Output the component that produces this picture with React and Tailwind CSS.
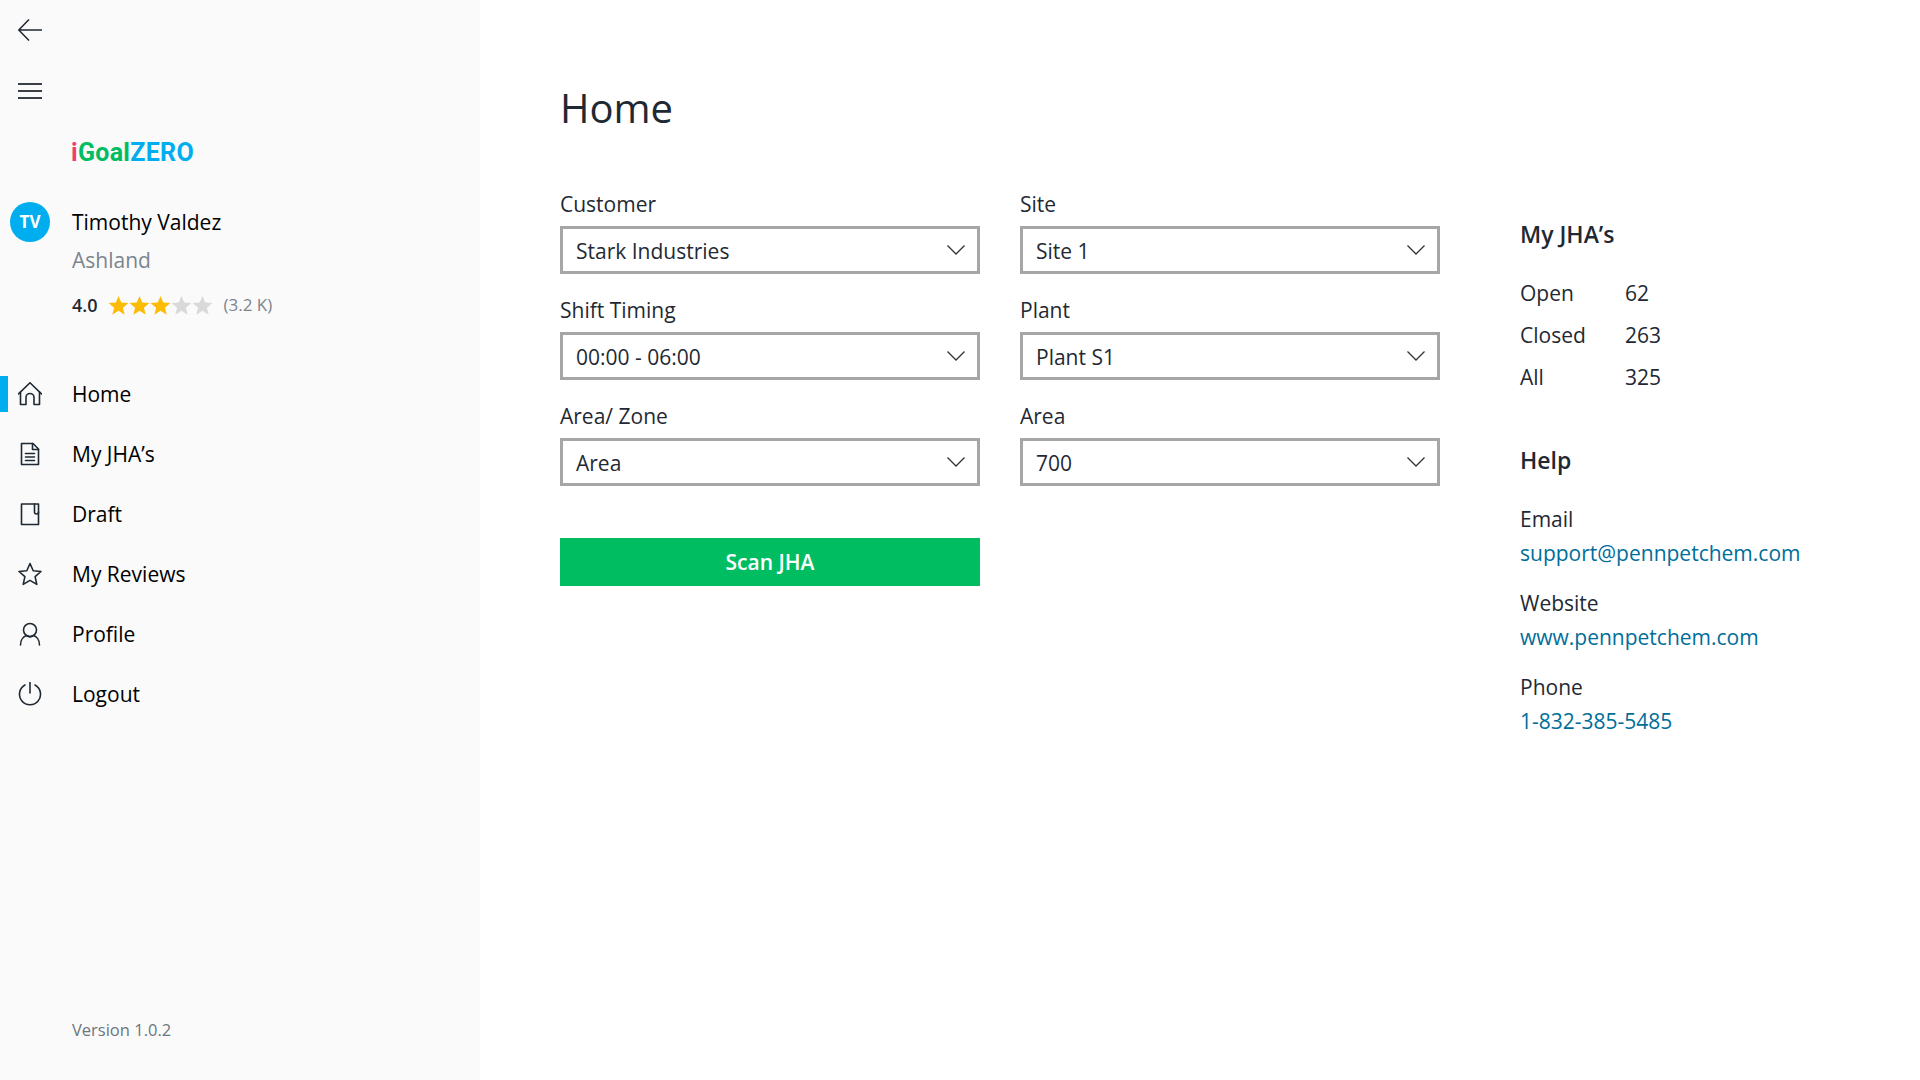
import React from 'react';

const stroke = { fill: 'none', stroke: 'currentColor', strokeWidth: 1.6, strokeLinecap: 'round', strokeLinejoin: 'round' };

const Icon = ({ children, className = 'w-6 h-6' }) => (
  <svg viewBox="0 0 24 24" className={className} {...stroke}>{children}</svg>
);

const HomeIcon = () => (
  <Icon>
    <path d="M0.5 12 12 0.8 23.5 12" />
    <path d="M2.5 10v12.5H8v-7a4 4 0 0 1 8 0v7h5.5V10" />
  </Icon>
);
const DocIcon = () => (
  <Icon>
    <path d="M3.5 1.5H15l5.5 5.5v15.5h-17z" />
    <path d="M14.5 1.5v6h6" />
    <path d="M7.5 11.5h9M7.5 15h9M7.5 18.5h9" />
  </Icon>
);
const DraftIcon = () => (
  <Icon>
    <path d="M3.5 2h17v20.5h-17z" />
    <path d="M16.5 2v8a2 2 0 0 0 4 0" />
  </Icon>
);
const StarOutline = () => (
  <Icon>
    <path d="M12 1.5l3.2 7.2 7.8.8-5.9 5.2 1.7 7.7-6.8-4-6.8 4 1.7-7.7L1 9.5l7.8-.8z" />
  </Icon>
);
const ProfileIcon = () => (
  <Icon>
    <circle cx="12" cy="8" r="6.5" />
    <path d="M2.5 23c0-5 3-8.5 6-9.5 2 1.5 5 1.5 7 0 3 1 6 4.5 6 9.5" />
  </Icon>
);
const PowerIcon = () => (
  <Icon>
    <path d="M7 3a10.5 10.5 0 1 0 10 0" />
    <path d="M12 0v11" />
  </Icon>
);

const Star = ({ on }) => (
  <svg viewBox="0 0 20 20" className={on ? 'w-[21px] h-[21px] text-[#fdbc04]' : 'w-[21px] h-[21px] text-[#d9d9d9]'} fill="currentColor">
    <path d="M10 1l2.6 6.2 6.9.5-5.3 4.4 1.7 6.6L10 15.1l-5.9 3.6 1.7-6.6L.5 7.7l6.9-.5z" />
  </svg>
);

const Chevron = () => (
  <svg viewBox="0 0 18 10" className="w-[18px] h-[10px] text-[#333333]" fill="none" stroke="currentColor" strokeWidth="1.3">
    <path d="M0.5 0.5 9 9l8.5-8.5" />
  </svg>
);

const navItems = [
  { label: 'Home', icon: HomeIcon, active: true },
  { label: 'My JHA’s', icon: DocIcon },
  { label: 'Draft', icon: DraftIcon },
  { label: 'My Reviews', icon: StarOutline },
  { label: 'Profile', icon: ProfileIcon },
  { label: 'Logout', icon: PowerIcon },
];

const fields = [
  { label: 'Customer', value: 'Stark Industries' },
  { label: 'Site', value: 'Site 1' },
  { label: 'Shift Timing', value: '00:00 - 06:00' },
  { label: 'Plant', value: 'Plant S1' },
  { label: 'Area/ Zone', value: 'Area' },
  { label: 'Area', value: '700' },
];

const stats = [
  { label: 'Open', value: '62' },
  { label: 'Closed', value: '263' },
  { label: 'All', value: '325' },
];

const help = [
  { label: 'Email', value: 'support@pennpetchem.com' },
  { label: 'Website', value: 'www.pennpetchem.com' },
  { label: 'Phone', value: '1-832-385-5485' },
];

const Sidebar = () => (
  <aside className="w-[480px] shrink-0 bg-[#fafafa] flex flex-col text-[#1f2933]">
    <div className="w-[60px] h-[60px] flex items-center justify-center">
      <svg viewBox="0 0 24 22" className="w-6 h-[22px]" fill="none" stroke="currentColor" strokeWidth="1.5">
        <path d="M24 11H1M11 0.5 0.8 11 11 21.5" />
      </svg>
    </div>
    <div className="w-[60px] h-[60px] pt-[1px] flex items-center justify-center">
      <div className="w-6 flex flex-col gap-[5px]">
        <div className="h-[2px] bg-[#3a3f45]" />
        <div className="h-[2px] bg-[#3a3f45]" />
        <div className="h-[2px] bg-[#3a3f45]" />
      </div>
    </div>
    <div className="h-[62px] pl-[71px] pt-[3px] flex items-center text-[25px] font-bold font-['Roboto',sans-serif] tracking-[0.3px]">
      <span className="text-[#ee3e6d]">i</span>
      <span className="text-[#00bd62]">Goal</span>
      <span className="text-[#00aeef]">ZERO</span>
    </div>
    <div className="flex mt-5 pl-[10px]">
      <div className="w-10 h-10 rounded-full bg-[#00aeef] text-white font-bold text-[17px] flex items-center justify-center">TV</div>
      <div className="ml-[22px]">
        <div className="h-[38px] leading-[40px] text-[21px] text-black">Timothy Valdez</div>
        <div className="h-[38px] leading-[40px] text-[21px] text-[#7a858e]">Ashland</div>
        <div className="mt-3 h-[30px] flex items-center">
          <span className="text-[18px] font-semibold text-[#1f2933] mr-[10px]">4.0</span>
          <Star on />
          <Star on />
          <Star on />
          <Star />
          <Star />
          <span className="ml-[11px] text-[17px] text-[#7a858e]">(3.2 K)</span>
        </div>
      </div>
    </div>
    <nav className="mt-11">
      {navItems.map(({ label, icon: NavIcon, active }) => (
        <div key={label} className="h-[60px] flex items-center">
          <div className={active ? 'w-2 h-9 bg-[#00aeef]' : 'w-2 h-9'} />
          <div className="w-11 flex justify-center">
            <NavIcon />
          </div>
          <span className="ml-5 pt-[2px] text-[21px] text-black">{label}</span>
        </div>
      ))}
    </nav>
    <div className="mt-auto mb-[35px] pl-[72px] h-[30px] leading-[30px] text-[16.5px] text-[#6b7680]">Version 1.0.2</div>
  </aside>
);

export default function App() {
  return (
    <div className="w-full h-[1080px] flex bg-white font-['Open_Sans',sans-serif] overflow-hidden">
      <Sidebar />
      <main className="flex-1 flex pl-[80px] pt-[78px] text-[#1f2933]">
        <div className="w-[880px]">
          <h1 className="h-[60px] leading-[60px] text-[40px] font-normal mb-[51px]">Home</h1>
          <div className="grid grid-cols-[420px_420px] gap-x-10 gap-y-[21px]">
            {fields.map((f) => (
              <div key={f.label}>
                <div className="h-[30px] leading-[30px] text-[21px] mb-[7px]">{f.label}</div>
                <div className="h-12 border-[3px] border-[#a6a6a6] pl-[13px] pr-3 flex items-center justify-between text-[21px]">
                  <span className="pt-[3px]">{f.value}</span>
                  <Chevron />
                </div>
              </div>
            ))}
          </div>
          <button className="mt-[52px] w-[420px] h-12 pt-[2px] bg-[#00bd62] text-white text-[21px] font-semibold flex items-center justify-center">
            Scan JHA
          </button>
        </div>
        <div className="ml-[80px] pt-[141px] text-[21px]">
          <h2 className="h-[30px] leading-[30px] text-[23px] font-semibold">My JHA’s</h2>
          <div className="mt-[29px] flex flex-col gap-3">
            {stats.map((s) => (
              <div key={s.label} className="h-[30px] leading-[30px] flex">
                <span className="w-[105px]">{s.label}</span>
                <span>{s.value}</span>
              </div>
            ))}
          </div>
          <h2 className="mt-[53px] h-[30px] leading-[30px] text-[23px] font-semibold">Help</h2>
          <div className="mt-[29px] flex flex-col gap-5">
            {help.map((h) => (
              <div key={h.label}>
                <div className="h-[30px] leading-[30px]">{h.label}</div>
                <div className="mt-1 h-[30px] leading-[30px] text-[#006e9a]">{h.value}</div>
              </div>
            ))}
          </div>
        </div>
      </main>
    </div>
  );
}
